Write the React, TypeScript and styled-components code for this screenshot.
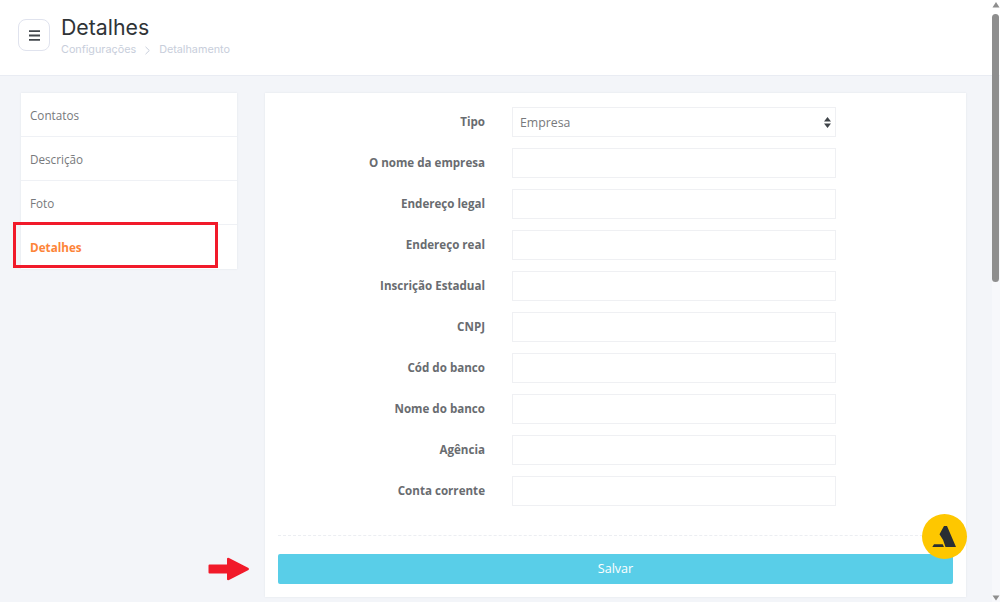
import styled, { createGlobalStyle } from "styled-components";

const Global = createGlobalStyle`
  html, body { margin: 0; padding: 0; height: 100%; }
  #root { height: 100vh; }
  * { box-sizing: border-box; }
`;

const fields = [
  "O nome da empresa",
  "Endereço legal",
  "Endereço real",
  "Inscrição Estadual",
  "CNPJ",
  "Cód do banco",
  "Nome do banco",
  "Agência",
  "Conta corrente",
];

const menu = ["Contatos", "Descrição", "Foto", "Detalhes"];

export default function App() {
  return (
    <Page>
      <Global />
      <Header>
        <MenuButton>
          <svg width="11" height="11" viewBox="0 0 11 11">
            <path d="M0 1.200h11M0 5.500h11M0 9.800h11" stroke="#43484d" strokeWidth="1.800" />
          </svg>
        </MenuButton>
        <div>
          <Title>Detalhes</Title>
          <Breadcrumb>
            <span>Configurações</span>
            <svg width="7" height="9" viewBox="0 0 7 9">
              <path d="M1.500 .8 5.300 4.500 1.500 8.200" fill="none" stroke="#c8cedb" strokeWidth="1" />
            </svg>
            <span>Detalhamento</span>
          </Breadcrumb>
        </div>
      </Header>
      <Body>
        <SideMenu>
          {menu.map((item) => (
            <MenuItem key={item} $active={item === "Detalhes"}>
              {item}
            </MenuItem>
          ))}
        </SideMenu>
        <FormCard>
          <Row>
            <Label>Tipo</Label>
            <SelectWrap>
              <Select defaultValue="Empresa">
                <option>Empresa</option>
              </Select>
              <svg width="7" height="11" viewBox="0 0 7 11">
                <path d="M3.500 0 7 4.500H0zM3.500 11 0 6.500h7z" fill="#3f4449" />
              </svg>
            </SelectWrap>
          </Row>
          {fields.map((f) => (
            <Row key={f}>
              <Label>{f}</Label>
              <Input />
            </Row>
          ))}
          <Divider />
          <SaveButton>Salvar</SaveButton>
        </FormCard>
      </Body>
      <Highlight />
      <Arrow width="42" height="24" viewBox="0 0 42 24">
        <path
          d="M1.500 7.500 H19 V1.500 Q19.500 .5 21 1 L40.500 11 Q41.500 12 40.500 13 L21 23 Q19.500 23.500 19 22.500 V16.500 H1.500 Q.5 16.500 .5 15.500 V8.500 Q.5 7.500 1.500 7.500Z"
          fill="#f11a2a"
        />
      </Arrow>
      <Badge>
        <svg width="45" height="45" viewBox="0 0 45 45">
          <path d="M22 12 H25 L34 33 H23.500 Q22 26 17.500 20.300Z" fill="#2a2f33" />
          <path d="M12 30.300 H20.700 L22 33 H10.300Z" fill="#2a2f33" />
        </svg>
      </Badge>
      <ScrollTrack>
        <svg width="8" height="14" viewBox="0 0 8 14">
          <path d="M4 2 7.500 7.500H.5z" fill="#8e8e8e" />
        </svg>
        <ScrollThumb />
        <ScrollSpace />
        <svg width="8" height="8" viewBox="0 0 8 8">
          <path d="M.5 1.500h7L4 6.500z" fill="#8e8e8e" />
        </svg>
      </ScrollTrack>
    </Page>
  );
}

const Page = styled.div`
  position: relative;
  height: 100vh;
  overflow: hidden;
  background: #f3f5f9;
  font-family: "Open Sans", sans-serif;
`;

const Header = styled.header`
  height: 76px;
  background: #fff;
  border-bottom: 1px solid #e9ecf3;
  display: flex;
  align-items: flex-start;
  gap: 11px;
  padding: 14px 18px 0;
`;

const MenuButton = styled.div`
  width: 32px;
  height: 32px;
  margin-top: 5px;
  border: 1px solid #e0e3ee;
  border-radius: 8px;
  background: #fff;
  display: flex;
  align-items: center;
  justify-content: center;
`;

const Title = styled.h1`
  margin: 0;
  font-family: Inter, sans-serif;
  font-size: 21.300px;
  font-weight: 400;
  line-height: 26px;
  color: #2f3437;
`;

const Breadcrumb = styled.div`
  display: flex;
  align-items: center;
  gap: 8px;
  margin-top: 3px;
  font-family: Inter, sans-serif;
  font-size: 10.800px;
  line-height: 14px;
  color: #c8cedb;
`;

const Body = styled.div`
  display: flex;
  align-items: flex-start;
  gap: 28px;
  padding: 17px 0 0 21px;
`;

const SideMenu = styled.nav`
  width: 216px;
  background: #fff;
  box-shadow: 0 0 2px rgba(40, 50, 80, 0.08);
`;

const MenuItem = styled.div<{ $active?: boolean }>`
  height: 44px;
  padding: ${(p) => (p.$active ? "0" : "1px")} 0 0 9px;
  display: flex;
  align-items: center;
  font-size: 11.700px;
  font-weight: ${(p) => (p.$active ? 700 : 400)};
  color: ${(p) => (p.$active ? "#fd8439" : "#77797c")};
  border-bottom: 1px solid #eff1f5;

  &:last-child {
    border-bottom-color: transparent;
  }
`;

const FormCard = styled.section`
  width: 701px;
  height: 504px;
  background: #fff;
  box-shadow: 0 0 2px rgba(40, 50, 80, 0.08);
  padding: 14px 13px 0 13px;
  display: flex;
  flex-direction: column;
  gap: 11px;
`;

const Row = styled.div`
  display: flex;
  align-items: flex-start;
  gap: 27px;
`;

const Label = styled.label`
  width: 207px;
  text-align: right;
  font-size: 11.600px;
  font-weight: 700;
  line-height: 30px;
  color: #696c70;
`;

const Input = styled.input`
  width: 324px;
  height: 30px;
  border: 1px solid #eff0f3;
  background: #fff;
  outline: none;
`;

const SelectWrap = styled.div`
  position: relative;
  width: 324px;
  height: 30px;

  svg {
    position: absolute;
    right: 5px;
    top: 10px;
  }
`;

const Select = styled.select`
  appearance: none;
  width: 100%;
  height: 100%;
  padding: 0 0 0 7px;
  border: 1px solid #eff0f3;
  border-radius: 0;
  background: #fff;
  font-family: "Open Sans", sans-serif;
  font-size: 12.300px;
  color: #77797c;
  outline: none;
`;

const Divider = styled.hr`
  width: 100%;
  margin: 18px 0 7px;
  border: 0;
  border-top: 1px dashed #eceef2;
`;

const SaveButton = styled.button`
  width: 675px;
  height: 30px;
  padding: 0 0 1px;
  border: 0;
  border-radius: 2px;
  background: #59cee8;
  color: #fff;
  font-family: "Open Sans", sans-serif;
  font-size: 12.600px;
`;

const Highlight = styled.div`
  position: absolute;
  left: 13px;
  top: 222px;
  width: 205px;
  height: 46px;
  border: 3px solid #f11a2a;
`;

const Arrow = styled.svg`
  position: absolute;
  left: 208px;
  top: 557px;
`;

const Badge = styled.div`
  position: absolute;
  left: 922px;
  top: 514px;
  width: 45px;
  height: 45px;
  border-radius: 50%;
  background: #fec700;

  svg {
    display: block;
  }
`;

const ScrollTrack = styled.div`
  position: absolute;
  top: 0;
  right: 0;
  bottom: 0;
  width: 8px;
  display: flex;
  flex-direction: column;
  background: rgba(255, 255, 255, 0.35);

  svg {
    display: block;
    flex: none;
  }
`;

const ScrollThumb = styled.div`
  height: 268px;
  width: 7px;
  border-radius: 4px;
  background: #8e8e8e;
`;

const ScrollSpace = styled.div`
  flex: 1;
`;
